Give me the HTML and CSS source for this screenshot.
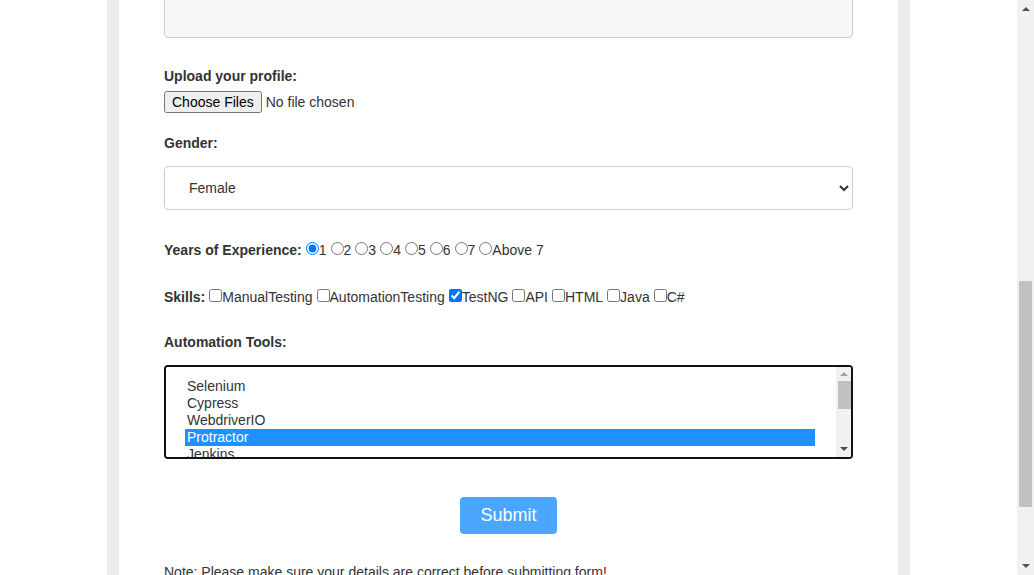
FILE: index.html
```html
<!DOCTYPE html>
<html lang="en">
<head>
<meta charset="utf-8">
<title>Registration Form</title>
<link rel="stylesheet" href="styles.css">
</head>
<body>
<div class="page">
  <form class="form" onsubmit="return false;">
    <h1 class="title">Student Registration Form</h1>
    <div class="field"><label class="label">First Name:</label><input class="text" type="text"></div>
    <div class="field"><label class="label">Last Name:</label><input class="text" type="text"></div>
    <div class="field"><label class="label">Email:</label><input class="text" type="email"></div>
    <div class="field"><label class="label">Mobile Number:</label><input class="text" type="tel"></div>
    <div class="field"><label class="label">Date of Birth:</label><input class="text" type="text"></div>
    <div class="field"><label class="label">Address:</label><textarea class="area" id="address"></textarea></div>

    <div class="field field-upload"><label class="label label-upload">Upload your profile:</label><input class="file" type="file" multiple></div>

    <div class="field field-gender"><label class="label label-gender">Gender:</label>
      <select class="select">
        <option>Male</option>
        <option selected>Female</option>
        <option>Other</option>
      </select>
    </div>

    <div class="row row-years"><b class="row-label">Years of Experience:</b><input class="radio" type="radio" name="exp" checked>1<input class="radio" type="radio" name="exp">2<input class="radio" type="radio" name="exp">3<input class="radio" type="radio" name="exp">4<input class="radio" type="radio" name="exp">5<input class="radio" type="radio" name="exp">6<input class="radio" type="radio" name="exp">7<input class="radio" type="radio" name="exp">Above 7</div>

    <div class="row row-skills"><b class="row-label">Skills:</b><input class="check" type="checkbox">ManualTesting<input class="check" type="checkbox">AutomationTesting<input class="check" type="checkbox" checked>TestNG<input class="check" type="checkbox">API<input class="check" type="checkbox">HTML<input class="check" type="checkbox">Java<input class="check" type="checkbox">C#</div>

    <div class="field field-tools"><label class="label label-tools">Automation Tools:</label>
      <div class="list-wrap">
        <select class="list" multiple>
          <option>Selenium</option>
          <option>Cypress</option>
          <option>WebdriverIO</option>
          <option selected>Protractor</option>
          <option>Jenkins</option>
          <option>Appium</option>
          <option>Postman</option>
          <option>JMeter</option>
          <option>TestComplete</option>
          <option>Katalon</option>
          <option>Playwright</option>
        </select>
        <div class="list-sb" aria-hidden="true">
          <span class="sb-up sb-up-dim"></span>
          <span class="list-thumb"></span>
          <span class="sb-down"></span>
        </div>
      </div>
    </div>

    <div class="actions"><button class="submit" type="submit">Submit</button></div>

    <p class="note">Note: Please make sure your details are correct before submitting form<span class="bang">!</span></p>
  </form>
</div>
<div class="page-sb" aria-hidden="true">
  <span class="sb-up"></span>
  <span class="page-thumb"></span>
  <span class="sb-down"></span>
</div>
<script src="script.js"></script>
</body>
</html>
```

FILE: styles.css
```css
* { box-sizing: border-box; }
html { scroll-behavior: auto; }
html, body { margin: 0; padding: 0; }
body {
  background: #fff;
  font-family: "Liberation Sans", Arial, sans-serif;
  font-size: 14px;
  color: #333;
  padding-right: 17px;
}
.page {
  width: 803px;
  margin: 0 auto;
  border-left: 12px solid #ececec;
  border-right: 12px solid #ececec;
  padding: 30px 45px 125px;
  background: #fff;
}
.form { margin: 0; }
.title {
  margin: 0 0 30px;
  font-size: 24px;
  line-height: 30px;
  text-align: center;
}
.field { margin-bottom: 30px; }
.label {
  display: block;
  font-weight: bold;
  line-height: 16px;
  margin-bottom: 8px;
  color: #333;
}
.text {
  display: block;
  width: 100%;
  height: 40px;
  margin: 0;
  border: 1px solid #ccc;
  border-radius: 4px;
  padding: 0 20px;
  font: inherit;
}
.area {
  display: block;
  width: 100%;
  height: 125px;
  margin: 0;
  border: 1px solid #ccc;
  border-radius: 4px;
  background: #f7f7f7;
  resize: none;
  font: inherit;
}
.field-upload { margin-bottom: 22px; }
.label-upload { margin-bottom: 7px; }
.file {
  display: block;
  margin: 0;
  font-family: "Liberation Sans", Arial, sans-serif;
  font-size: 14px;
  color: #333;
}
.field-gender { margin-bottom: 29px; }
.label-gender { margin-bottom: 15px; }
.select {
  display: block;
  width: 100%;
  height: 44px;
  margin: 0;
  border: 1px solid #ccc;
  border-radius: 4px;
  background: #fff;
  padding: 0 4px 0 20px;
  font: inherit;
  color: #333;
}
.row {
  height: 16px;
  line-height: 16px;
  white-space: nowrap;
}
.radio { margin: 3px 0 0 4px; }
.check { margin: 3px 0 3px 4px; }
.row-years { margin-bottom: 31px; }
.row-skills { margin-bottom: 32px; }
.row-label { font-weight: bold; }
.field-tools { margin-bottom: 38px; }
.label-tools { margin-bottom: 15px; }
.list-wrap { position: relative; }
.list {
  display: block;
  width: 100%;
  height: 94px;
  margin: 0;
  border: 2px solid #111;
  border-radius: 4px;
  padding: 11px 36px 9px 19px;
  font: inherit;
  color: #333;
  outline: none;
  background: #fff;
}
.list option:checked {
  background: #1e90ff linear-gradient(#1e90ff, #1e90ff);
  color: #fff;
}
.list-sb {
  position: absolute;
  top: 2px;
  right: 2px;
  bottom: 2px;
  width: 15px;
  background: #f1f1f1;
  border-radius: 0 2px 2px 0;
}
.list-thumb {
  position: absolute;
  left: 2px;
  right: 0;
  top: 14px;
  height: 28px;
  background: #c1c1c1;
}
.list-sb .sb-up { top: 5px; left: 4px; }
.list-sb .sb-down { bottom: 6px; left: 4px; }
.sb-up, .sb-down {
  position: absolute;
  width: 0;
  height: 0;
  border-left: 4px solid transparent;
  border-right: 4px solid transparent;
}
.sb-up { border-bottom: 4px solid #505050; }
.sb-up-dim { border-bottom-color: #a3a3a3; }
.sb-down { border-top: 4px solid #505050; }
.page-sb {
  position: fixed;
  top: 0;
  right: 0;
  bottom: 0;
  width: 17px;
  background: #f1f1f1;
}
.page-sb .sb-up { top: 7px; left: 5px; }
.page-sb .sb-down { bottom: 7px; left: 5px; }
.page-thumb {
  position: absolute;
  left: 2px;
  width: 13px;
  top: 281px;
  height: 226px;
  background: #c1c1c1;
}
.actions {
  text-align: center;
  margin-bottom: 30px;
}
.submit {
  width: 97px;
  height: 37px;
  padding: 0;
  border: none;
  border-radius: 4px;
  background: rgb(75, 166, 255);
  color: #fff;
  font-family: "Liberation Sans", Arial, sans-serif;
  font-size: 18px;
  cursor: pointer;
}
.note {
  margin: 0;
  line-height: 16px;
  color: #333;
}
.bang { color: #a00000; }
```

FILE: script.js
```js
function placeView() {
  var area = document.getElementById('address');
  var rect = area.getBoundingClientRect();
  window.scrollTo(0, window.scrollY + rect.bottom - 38);
}
placeView();
window.addEventListener('load', placeView);
```
